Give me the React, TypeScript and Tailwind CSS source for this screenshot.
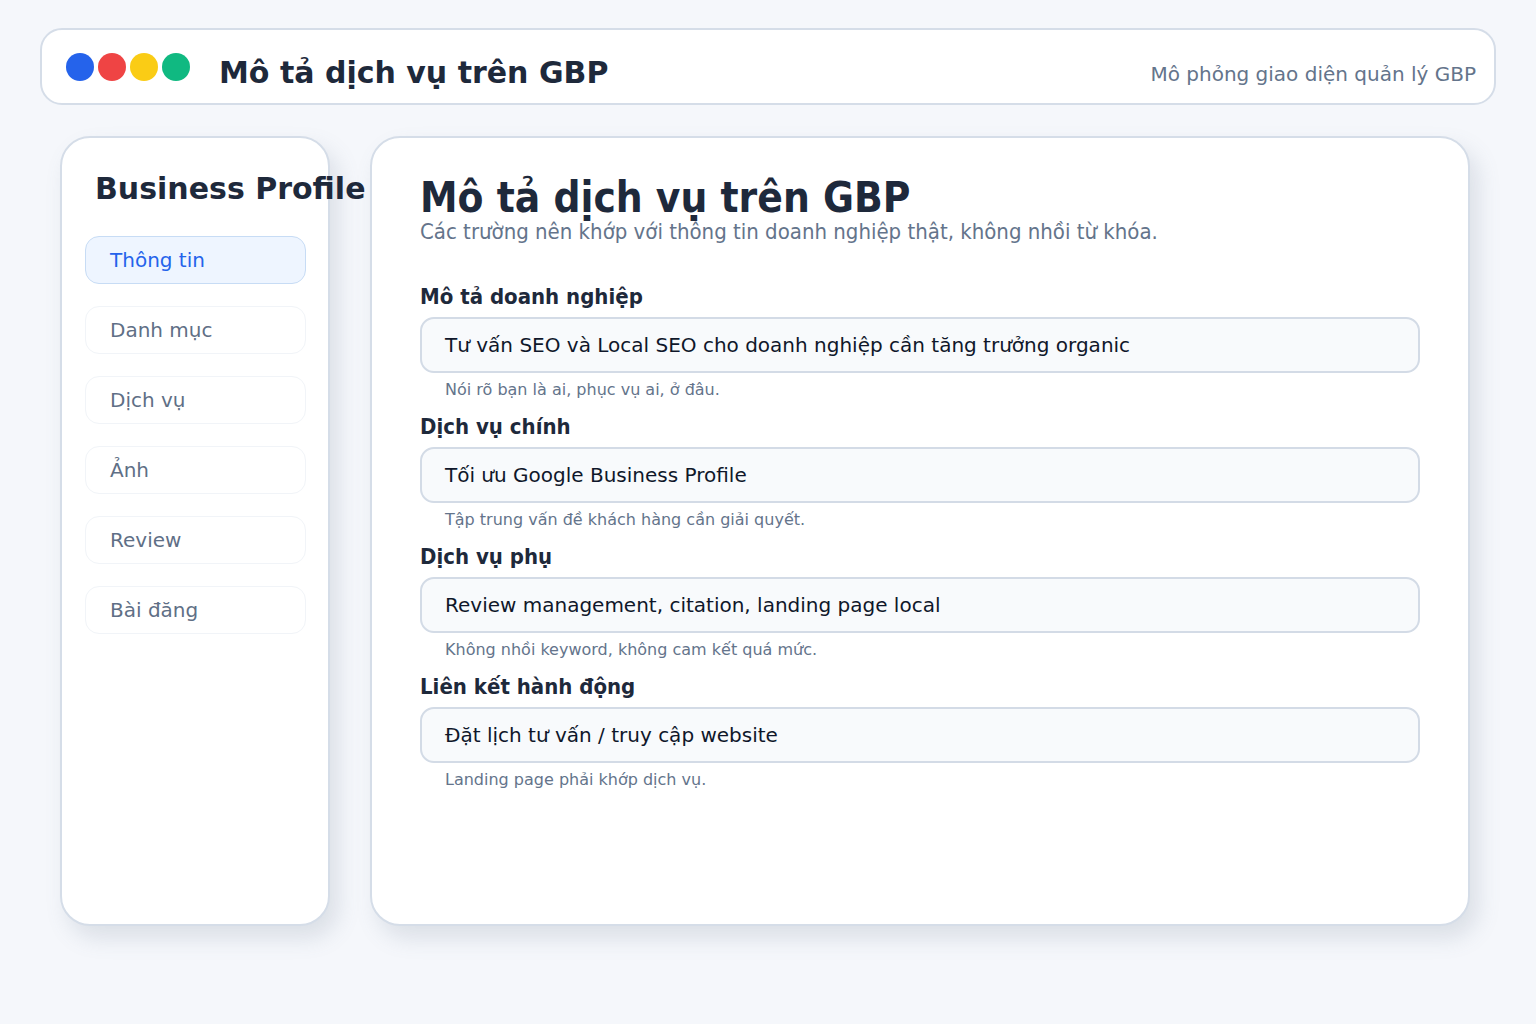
const navItems = ["Thông tin", "Danh mục", "Dịch vụ", "Ảnh", "Review", "Bài đăng"];

const fields = [
  {
    label: "Mô tả doanh nghiệp",
    value: "Tư vấn SEO và Local SEO cho doanh nghiệp cần tăng trưởng organic",
    hint: "Nói rõ bạn là ai, phục vụ ai, ở đâu.",
  },
  {
    label: "Dịch vụ chính",
    value: "Tối ưu Google Business Profile",
    hint: "Tập trung vấn đề khách hàng cần giải quyết.",
  },
  {
    label: "Dịch vụ phụ",
    value: "Review management, citation, landing page local",
    hint: "Không nhồi keyword, không cam kết quá mức.",
  },
  {
    label: "Liên kết hành động",
    value: "Đặt lịch tư vấn / truy cập website",
    hint: "Landing page phải khớp dịch vụ.",
  },
];

export default function App() {
  return (
    <div className="min-h-screen w-full bg-[#f5f7fb] px-[40px] pt-[28px] font-['DejaVu_Sans',sans-serif]">
      <header className="flex h-[77px] items-center rounded-[22px] border-2 border-[#d5dde8] bg-white pl-[24px] pr-[18px]">
        <div className="flex gap-[4px]">
          <span className="h-[28px] w-[28px] rounded-full bg-[#2563eb]" />
          <span className="h-[28px] w-[28px] rounded-full bg-[#ef4444]" />
          <span className="h-[28px] w-[28px] rounded-full bg-[#facc15]" />
          <span className="h-[28px] w-[28px] rounded-full bg-[#10b981]" />
        </div>
        <h1 className="ml-[29px] mt-[12px] text-[30px] font-bold text-[#1e293b]">Mô tả dịch vụ trên GBP</h1>
        <p className="ml-auto mt-[14px] text-[20px] text-[#64748b]">Mô phỏng giao diện quản lý GBP</p>
      </header>

      <div className="mt-[31px] flex gap-[40px] pl-[20px] pr-[26px]">
        <aside className="h-[790px] w-[270px] shrink-0 rounded-[30px] border-2 border-[#d5dde8] bg-white px-[23px] pt-[28px] shadow-[8px_12px_22px_rgba(100,116,139,0.18)]">
          <h2 className="whitespace-nowrap pl-[10px] text-[30px] font-bold text-[#1e293b]">Business Profile</h2>
          <nav className="mt-[25px] flex flex-col gap-[22px]">
            {navItems.map((item, i) => (
              <div
                key={item}
                className={
                  i === 0
                    ? "flex h-[48px] w-[221px] items-center rounded-[14px] border border-[#c7dcf5] bg-[#eef5ff] px-[24px] text-[20px] text-[#2563eb]"
                    : "flex h-[48px] w-[221px] items-center rounded-[14px] border border-[#f1f4f8] bg-white px-[24px] text-[20px] text-[#5f6f86]"
                }
              >
                {item}
              </div>
            ))}
          </nav>
        </aside>

        <main className="h-[790px] flex-1 rounded-[30px] border-2 border-[#d5dde8] bg-white pl-[48px] pr-[48px] pt-[36px] shadow-[8px_12px_22px_rgba(100,116,139,0.18)]">
          <h2 className="font-['DejaVu_Sans_Condensed',sans-serif] text-[42px] font-bold leading-[47px] text-[#1e293b]">
            Mô tả dịch vụ trên GBP
          </h2>
          <p className="-mt-[2px] font-['DejaVu_Sans_Condensed',sans-serif] text-[22px] leading-[26px] text-[#64748b]">
            Các trường nên khớp với thông tin doanh nghiệp thật, không nhồi từ khóa.
          </p>
          <div className="mt-[40px] flex flex-col gap-[15px]">
            {fields.map((f) => (
              <div key={f.label}>
                <div className="font-['DejaVu_Sans_Condensed',sans-serif] text-[22px] font-bold leading-[24px] text-[#1e293b]">
                  {f.label}
                </div>
                <div className="mt-[8px] flex h-[56px] items-center rounded-[14px] border-2 border-[#d3dbe6] bg-[#f8fafc] px-[23px] text-[20px] text-[#0f172a]">
                  {f.value}
                </div>
                <div className="mt-[7px] pl-[25px] text-[16px] leading-[20px] text-[#64748b]">{f.hint}</div>
              </div>
            ))}
          </div>
        </main>
      </div>
    </div>
  );
}
